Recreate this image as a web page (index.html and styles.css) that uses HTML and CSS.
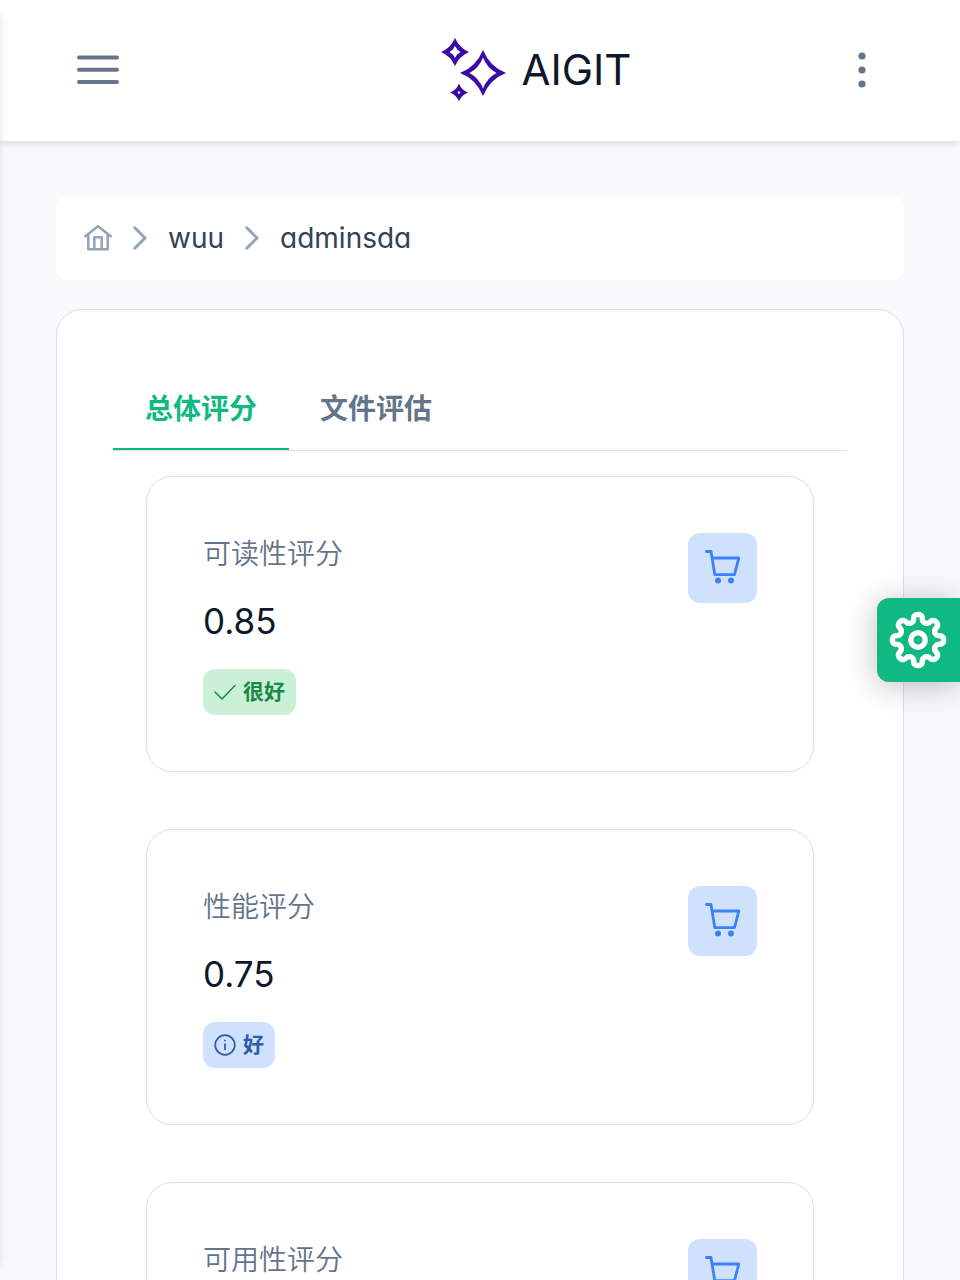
FILE: index.html
```html
<!DOCTYPE html>
<html lang="zh-CN">
<head>
<meta charset="utf-8">
<meta name="viewport" content="width=device-width, initial-scale=1">
<title>AIGIT</title>
<link rel="stylesheet" href="styles.css">
</head>
<body>
<svg class="defs" aria-hidden="true">
  <symbol id="cart" viewBox="0 0 36 36"><path d="M1.500 1.500H6L9.800 24.600H29.500L33.800 8H7.200" fill="none" stroke="currentColor" stroke-width="2.800" stroke-linecap="round" stroke-linejoin="round"/><circle cx="13" cy="30.500" r="3" fill="currentColor"/><circle cx="26" cy="30.500" r="3" fill="currentColor"/></symbol>
  <symbol id="chevron" viewBox="0 0 14 26"><path d="M1.800 2.800L12 13L1.800 23.200" fill="none" stroke="currentColor" stroke-width="3" stroke-linecap="round" stroke-linejoin="round"/></symbol>
</svg>
<header class="topbar">
  <button class="icon-button" aria-label="菜单">
    <svg width="42" height="30" viewBox="0 0 42 30"><path d="M2 2.600H40M2 14.800H40M2 27H40" stroke="currentColor" stroke-width="4" stroke-linecap="round"/></svg>
  </button>
  <a class="brand" href="#">
    <svg width="66" height="64" viewBox="0 0 66 64" fill="currentColor" fill-rule="evenodd">
      <path d="M42 12Q49 29 65 35Q49 41 42 58Q35 41 19 35Q35 29 42 12ZM42 19.500Q38 30 28.500 35Q38 40 42 50.500Q46 40 55.500 35Q46 30 42 19.500Z"/>
      <path d="M14 0Q18.500 10 28 14Q18.500 18 14 28Q9.500 18 0 14Q9.500 10 14 0ZM14 8Q12 12 8.500 14Q12 16 14 20Q16 16 19.500 14Q16 12 14 8Z"/>
      <path d="M18 45.500Q20.500 52 27 54.500Q20.500 57 18 63.500Q15.500 57 9 54.500Q15.500 52 18 45.500ZM18 53L16.500 54.500L18 56L19.500 54.500Z"/>
    </svg>
    <span>AIGIT</span>
  </a>
  <button class="icon-button" aria-label="更多">
    <svg width="42" height="42" viewBox="0 0 42 42" fill="currentColor"><circle cx="21" cy="7" r="3.600"/><circle cx="21" cy="21" r="3.600"/><circle cx="21" cy="35" r="3.600"/></svg>
  </button>
</header>
<div class="sidebar-edge"></div>
<main class="content">
  <nav class="breadcrumb" aria-label="路径">
    <a href="#" aria-label="首页"><svg width="28" height="28" viewBox="0 0 28 28" fill="none" stroke="currentColor" stroke-width="2.500" stroke-linecap="round" stroke-linejoin="round"><path d="M1.300 12.300L14 2.300L26.700 12.300M4.300 10.500V25.300H23.700V10.500M10.300 25V13.300H17.700V25"/></svg></a>
    <svg class="chevron"><use href="#chevron"/></svg>
    <a href="#">wuu</a>
    <svg class="chevron"><use href="#chevron"/></svg>
    <a href="#">adminsda</a>
  </nav>
  <section class="panel">
    <div class="tabs" role="tablist">
      <button class="tab active" role="tab" aria-selected="true">总体评分</button>
      <button class="tab" role="tab" aria-selected="false">文件评估</button>
    </div>
    <div class="scores" role="tabpanel">
      <article class="score">
        <div>
          <h2>可读性评分</h2>
          <p class="value">0.85</p>
          <span class="badge good"><svg width="22" height="22" viewBox="0 0 22 22" fill="none" stroke="currentColor" stroke-width="1.500" stroke-linecap="round" stroke-linejoin="round"><path d="M1 11L8 18L21 4.500"/></svg><span>很好</span></span>
        </div>
        <span class="tile"><svg><use href="#cart"/></svg></span>
      </article>
      <article class="score">
        <div>
          <h2>性能评分</h2>
          <p class="value">0.75</p>
          <span class="badge fine"><svg width="22" height="22" viewBox="0 0 22 22" fill="none" stroke="currentColor" stroke-width="1.700"><circle cx="11" cy="11" r="9.800"/><path d="M11 9.500V16M11 5.800V7.300"/></svg><span>好</span></span>
        </div>
        <span class="tile"><svg><use href="#cart"/></svg></span>
      </article>
      <article class="score">
        <div><h2>可用性评分</h2></div>
        <span class="tile"><svg><use href="#cart"/></svg></span>
      </article>
    </div>
  </section>
</main>
<button class="settings" aria-label="设置">
  <svg width="58" height="58" viewBox="-29 -29 58 58" fill="none" stroke="currentColor" stroke-width="5.400" stroke-linejoin="round"><circle r="7.200"/><path id="gear" d=""/></svg>
</button>
<script src="gear.js"></script>
</body>
</html>
```
FILE: styles.css
```css
* { box-sizing: border-box; }
body {
  margin: 0;
  background: #f8fafc;
  color: #0f172a;
  font-family: Inter, "Noto Sans CJK SC", sans-serif;
  font-feature-settings: "cv02", "cv03", "cv04", "cv11";
  font-size: 28px;
  height: 100vh;
  overflow: hidden;
}
h2, p { margin: 0; }
a { color: inherit; text-decoration: none; }
button { font: inherit; font-feature-settings: inherit; border: 0; background: none; padding: 0; color: inherit; }
svg { display: block; flex: none; }
.defs { position: absolute; width: 0; height: 0; }
.topbar {
  display: flex;
  align-items: center;
  justify-content: space-between;
  height: 141px;
  padding: 0 77px 2px;
  background: #fff;
  box-shadow: 0 2px 8px rgba(0, 0, 0, .14);
}
.icon-button { color: #64748b; }
.brand { display: flex; align-items: center; gap: 15px; padding-left: 112px; color: #3b0ca3; font-size: 42px; }
.brand span { color: #0f172a; }
.sidebar-edge {
  position: fixed;
  top: 14px;
  bottom: 14px;
  left: -10px;
  width: 10px;
  box-shadow: 0 0 8px rgba(0, 0, 0, .12);
}
.content { padding: 56px; }
.breadcrumb {
  display: flex;
  align-items: center;
  gap: 21px;
  height: 83px;
  padding: 0 28px 2px;
  margin-bottom: 29px;
  border-radius: 12px;
  background: #fff;
  color: #334155;
}
.breadcrumb a:first-child, .chevron { color: #94a3b8; }
.chevron { width: 14px; height: 26px; }
.panel {
  padding: 56px;
  border: 1px solid #dae1eb;
  border-radius: 26px;
  background: #fff;
}
.tabs { display: flex; border-bottom: 1px solid #dae1eb; }
.tab {
  height: 84px;
  padding: 0 32px;
  border-bottom: 2px solid transparent;
  color: #64748b;
  font-weight: 700;
}
.tab + .tab { padding-left: 31px; }
.tab.active { color: #10b981; border-color: #10b981; }
.scores { display: grid; gap: 57px; padding: 25px 33px; }
.score {
  display: flex;
  justify-content: space-between;
  align-items: flex-start;
  min-height: 296px;
  padding: 56px 56px 55px;
  border: 1px solid #dae1eb;
  border-radius: 26px;
}
h2 { color: #64748b; font-size: 28px; font-weight: 350; line-height: 42px; }
.value { margin: 19px 0 21px; font-size: 35px; font-weight: 400; line-height: 54px; }
.badge {
  display: flex;
  width: fit-content;
  align-items: center;
  gap: 7px;
  height: 46px;
  padding: 0 11px;
  border-radius: 12px;
  font-size: 21px;
  font-weight: 700;
}
.badge span { padding-bottom: 4px; }
.good { background: #caf1d8; color: #188a42; }
.fine { background: #d0e1fd; color: #2b5cab; }
.tile {
  display: grid;
  place-items: center;
  width: 69px;
  height: 70px;
  border-radius: 12px;
  background: #d0e1fd;
  color: #3b82f6;
}
.tile svg { width: 36px; height: 36px; }
.settings {
  position: fixed;
  top: 598px;
  right: 0;
  display: grid;
  place-items: center;
  width: 83px;
  height: 84px;
  padding-right: 1px;
  border-radius: 12px 0 0 12px;
  background: #10b981;
  color: #fff;
  box-shadow: 0 4px 32px rgba(0, 0, 0, .25);
}
```
FILE: gear.js
```js
const points = [];
for (let i = 0; i < 360; i++) {
  const t = i * Math.PI / 180;
  const r = 22 + 3.6 * Math.cos(8 * t);
  const a = t + 0.04 * Math.sin(16 * t);
  points.push((r * Math.cos(a)).toFixed(2) + "," + (r * Math.sin(a)).toFixed(2));
}
document.getElementById("gear").setAttribute("d", "M" + points.join("L") + "Z");
```
